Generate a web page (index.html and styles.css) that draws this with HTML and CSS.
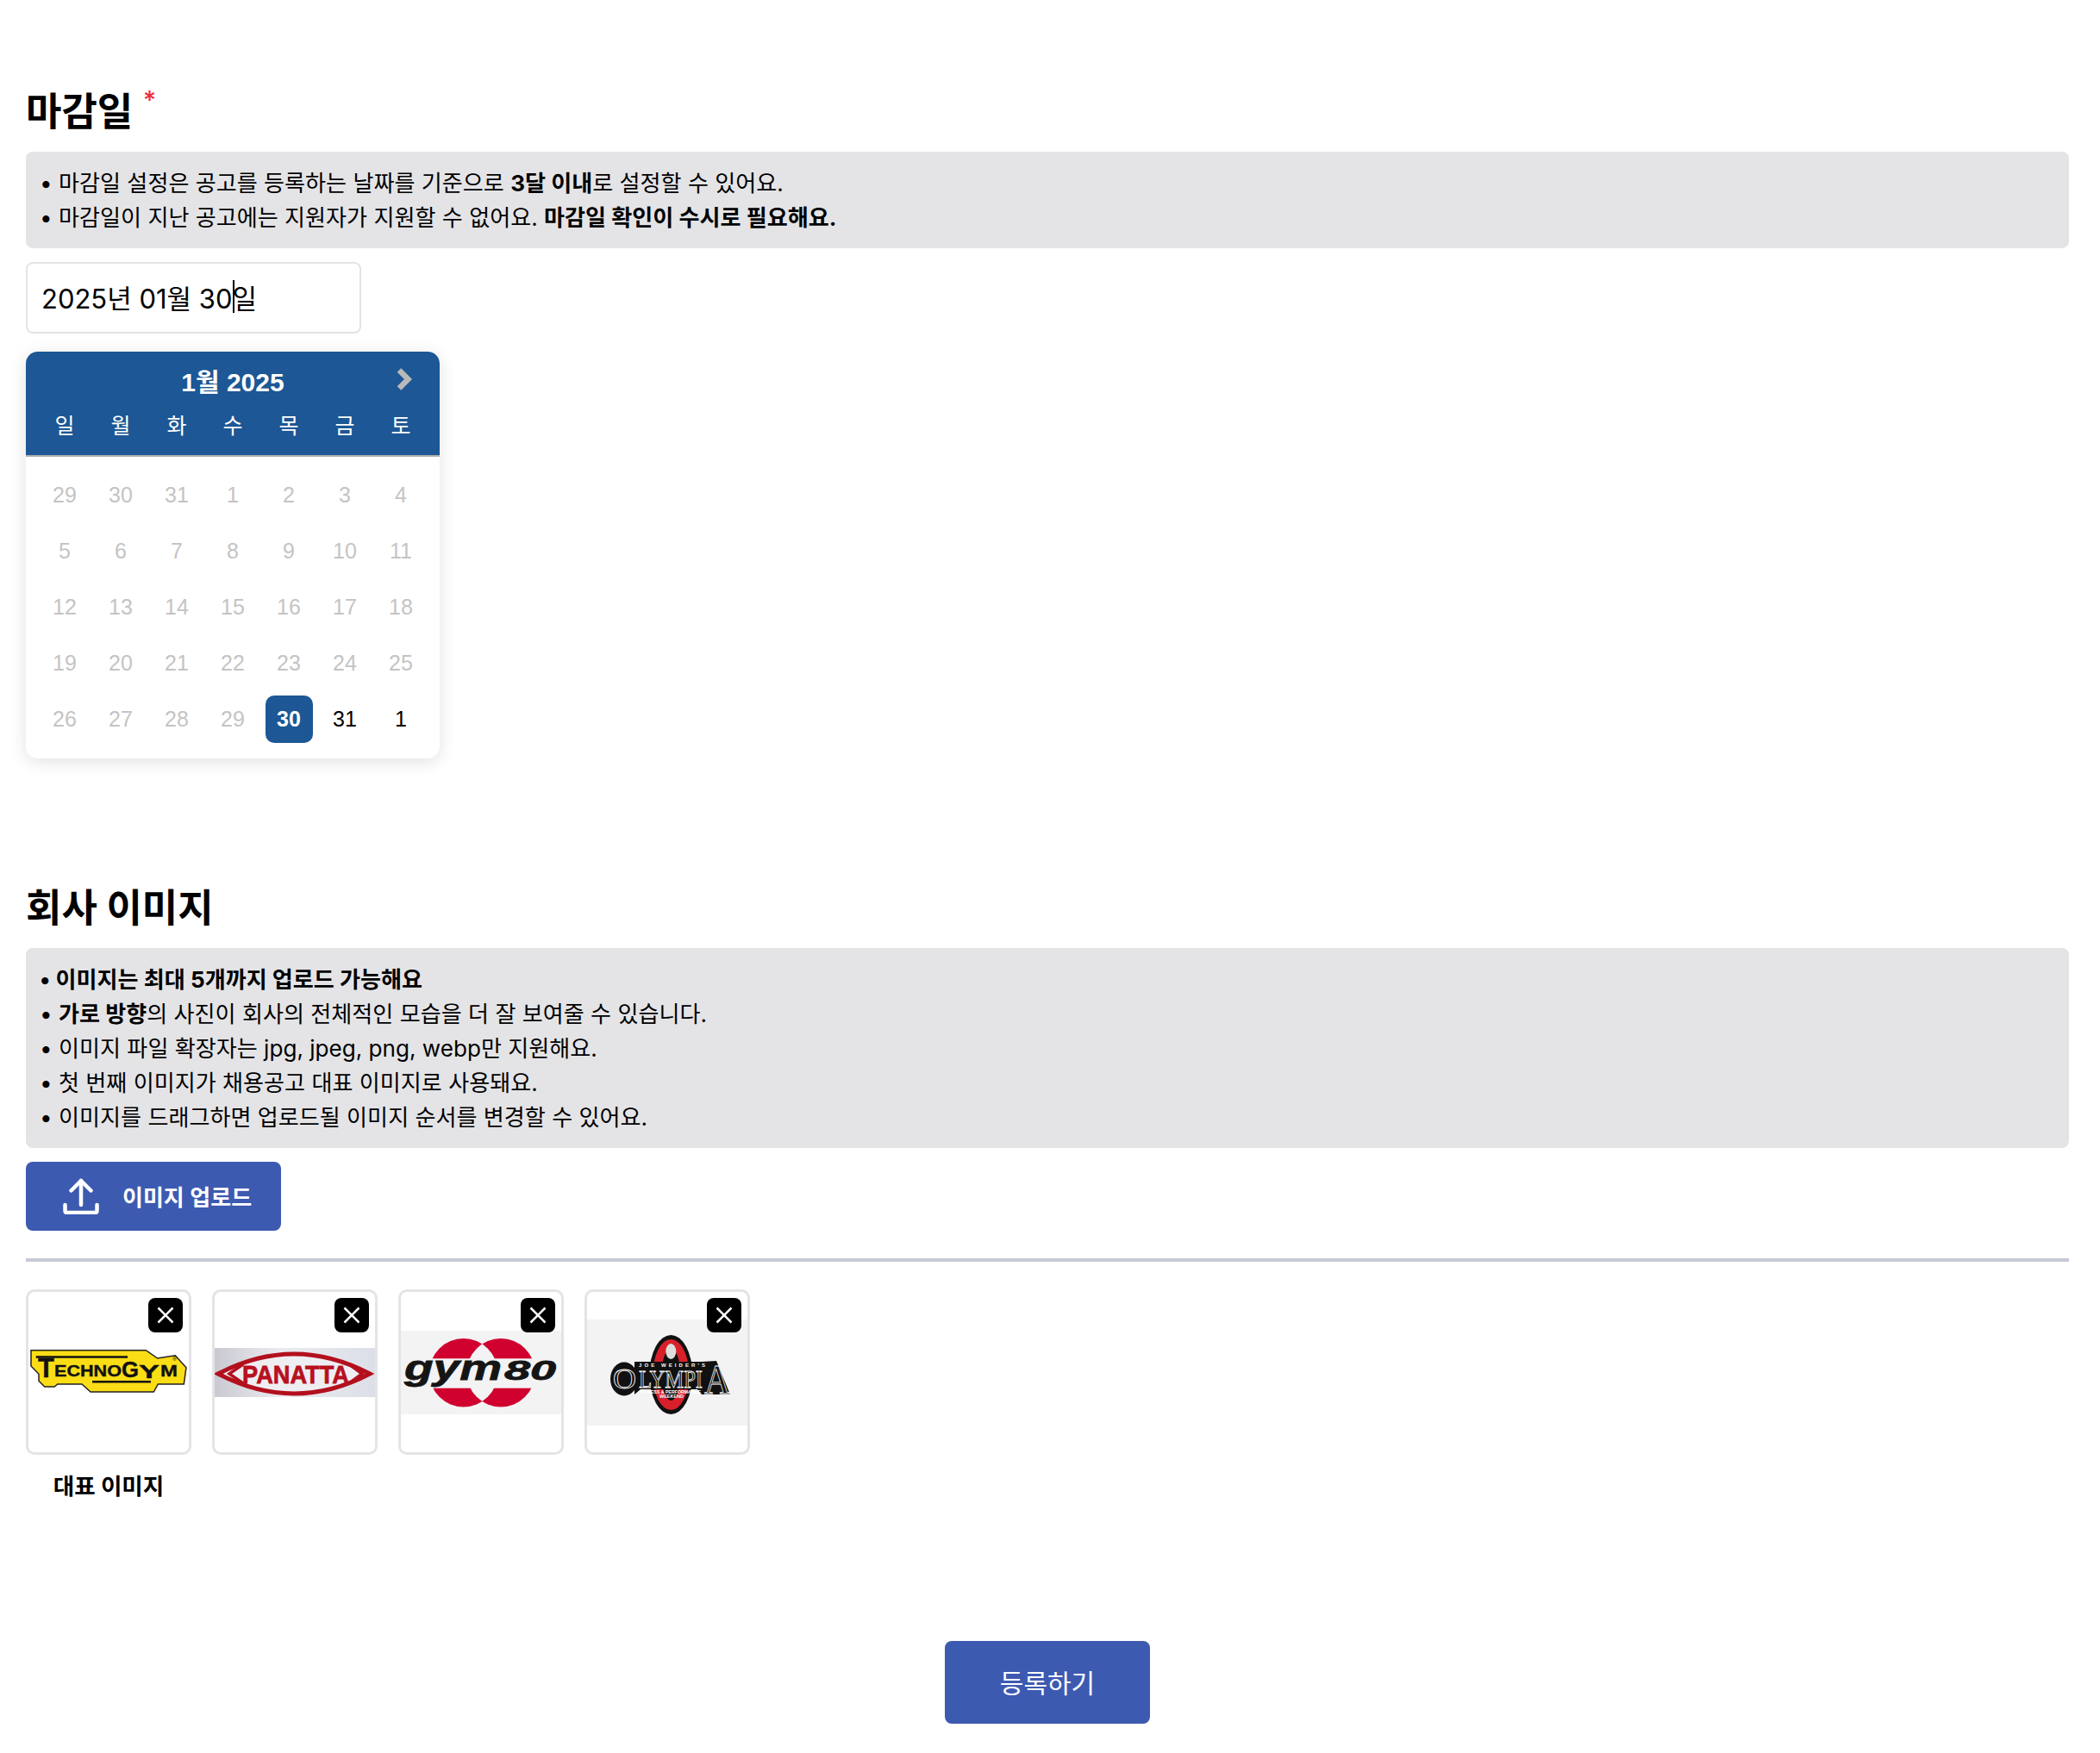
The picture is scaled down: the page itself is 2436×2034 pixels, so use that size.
FILE: index.html
```html
<!DOCTYPE html>
<html lang="ko">
<head>
    <meta charset="UTF-8">
    <meta name="viewport" content="width=device-width, initial-scale=1.0">
    <title>공고 등록</title>
    <link rel="stylesheet" href="styles.css">
</head>
<body>
    <section class="field deadline">
        <h2 class="fieldTitle">마감일 <span class="required">*</span></h2>
        <div class="infoBox">
            <p>• 마감일 설정은 공고를 등록하는 날짜를 기준으로 <b>3달 이내</b>로 설정할 수 있어요.</p>
            <p>• 마감일이 지난 공고에는 지원자가 지원할 수 없어요. <b>마감일 확인이 수시로 필요해요.</b></p>
        </div>
        <div class="dateInput">2025년 01월 30<span class="caret"></span>일</div>

        <div class="calendar">
            <div class="calHeader">
                <div class="calTitleRow">
                    <span></span>
                    <span class="calTitle">1월 2025</span>
                    <svg class="calNext" width="18" height="26" viewBox="0 0 18 26"><path d="M3 2.500L13.500 13L3 23.500" fill="none" stroke="#b9b9b9" stroke-width="6.500"/></svg>
                </div>
                <div class="calGrid calNames">
                    <span>일</span><span>월</span><span>화</span><span>수</span><span>목</span><span>금</span><span>토</span>
                </div>
            </div>
            <div class="calGrid calDays">
                <span class="off">29</span><span class="off">30</span><span class="off">31</span><span class="off">1</span><span class="off">2</span><span class="off">3</span><span class="off">4</span>
                <span class="off">5</span><span class="off">6</span><span class="off">7</span><span class="off">8</span><span class="off">9</span><span class="off">10</span><span class="off">11</span>
                <span class="off">12</span><span class="off">13</span><span class="off">14</span><span class="off">15</span><span class="off">16</span><span class="off">17</span><span class="off">18</span>
                <span class="off">19</span><span class="off">20</span><span class="off">21</span><span class="off">22</span><span class="off">23</span><span class="off">24</span><span class="off">25</span>
                <span class="off">26</span><span class="off">27</span><span class="off">28</span><span class="off">29</span><span class="selected"><b>30</b></span><span>31</span><span>1</span>
            </div>
        </div>
    </section>

    <section class="field images">
        <h2 class="fieldTitle">회사 이미지</h2>
        <div class="infoBox">
            <p><b>• 이미지는 최대 5개까지 업로드 가능해요</b></p>
            <p>• <b>가로 방향</b>의 사진이 회사의 전체적인 모습을 더 잘 보여줄 수 있습니다.</p>
            <p>• 이미지 파일 확장자는 jpg, jpeg, png, webp만 지원해요.</p>
            <p>• 첫 번째 이미지가 채용공고 대표 이미지로 사용돼요.</p>
            <p>• 이미지를 드래그하면 업로드될 이미지 순서를 변경할 수 있어요.</p>
        </div>
        <button type="button" class="uploadBtn">
            <svg width="42" height="42" viewBox="0 0 42 42" fill="none" stroke="#fff" stroke-width="4.500" stroke-linecap="round" stroke-linejoin="round"><path d="M2.500 31V37.500Q2.500 40 5 40H37Q39.500 40 39.500 37.500V31"/><path d="M21 31V3"/><path d="M9.500 14.500L21 3L32.500 14.500"/></svg>
            <span>이미지 업로드</span>
        </button>
        <hr class="divider">

        <div class="thumbList">
            <div class="thumbItem">
                <div class="thumb">
                    <svg class="logo" viewBox="0 0 186 56" height="56">
                        <path d="M3 2.700H136.300L149.700 12L170.300 8.700L183 22.700L180.300 42H150.300L145.300 51H72L62 42H33.700L30.300 45H18.700L12 38.300V30.300L3 21Z" fill="#fbdd16" stroke="#222" stroke-width="1.500"/>
                        <path d="M8.700 10.500H115M74 39.300H142" stroke="#111" stroke-width="2.500"/>
                        <g font-family="Liberation Sans" font-weight="700" fill="#111" stroke="#111" stroke-width="0.400">
                            <text x="11" y="34" font-size="31">T</text>
                            <text x="30" y="33" textLength="78" lengthAdjust="spacingAndGlyphs" font-size="19">ECHNO</text>
                            <text x="108" y="34" textLength="20" lengthAdjust="spacingAndGlyphs" font-size="25">G</text>
                            <text x="128" y="35" textLength="24" lengthAdjust="spacingAndGlyphs" font-size="22">Y</text>
                            <text x="153" y="33" textLength="20" lengthAdjust="spacingAndGlyphs" font-size="19">M</text>
                        </g>
                        <text x="167" y="15" font-family="Liberation Sans" font-size="7" fill="#111">®</text>
                    </svg>
                    <button type="button" class="removeBtn"><svg width="20" height="20" viewBox="0 0 20 20"><path d="M1.500 1.500L18.500 18.500M18.500 1.500L1.500 18.500" stroke="#fff" stroke-width="2.500"/></svg></button>
                </div>
                <p class="thumbLabel">대표 이미지</p>
            </div>
            <div class="thumbItem">
                <div class="thumb">
                    <svg class="logo" viewBox="0 0 186 57" height="57">
                        <defs><linearGradient id="panattaBg" x1="0" x2="1" y1="0" y2="0"><stop offset="0" stop-color="#c9c9d1"/><stop offset="0.4" stop-color="#ebebef"/><stop offset="1" stop-color="#dcdfe8"/></linearGradient></defs>
                        <rect width="186" height="57" fill="url(#panattaBg)"/>
                        <path d="M4 30Q92 -16 180 30Q92 76 4 30Z" fill="#eeeef2" stroke="#b3101e" stroke-width="5"/>
                        <path d="M33 19L17 30L33 41M156 19L171 30L156 41" fill="none" stroke="#b3101e" stroke-width="3.500"/>
                        <text x="32" y="41" textLength="124" lengthAdjust="spacingAndGlyphs" font-family="Liberation Sans" font-weight="700" font-size="30" fill="#b8101f" stroke="#b8101f" stroke-width="0.800">PANATTA</text>
                    </svg>
                    <button type="button" class="removeBtn"><svg width="20" height="20" viewBox="0 0 20 20"><path d="M1.500 1.500L18.500 18.500M18.500 1.500L1.500 18.500" stroke="#fff" stroke-width="2.500"/></svg></button>
                </div>
            </div>
            <div class="thumbItem">
                <div class="thumb">
                    <svg class="logo" viewBox="0 0 186 97" height="97">
                        <rect width="186" height="97" fill="#f3f3f4"/>
                        <path d="M33 48.700a39.700 39.700 0 1 0 79.400 0a39.700 39.700 0 1 0 -79.400 0ZM76.300 48.700a39.700 39.700 0 1 0 79.400 0a39.700 39.700 0 1 0 -79.400 0Z" fill="#d0012f" fill-rule="evenodd"/>
                        <rect y="32.300" width="186" height="34.400" fill="#f3f3f4"/>
                        <g font-family="Liberation Sans" font-weight="700" font-style="italic" fill="#151515" stroke="#151515" stroke-width="0.800">
                            <text x="4" y="57" textLength="113" lengthAdjust="spacingAndGlyphs" font-size="41">gym</text>
                            <text x="120" y="57" textLength="60" lengthAdjust="spacingAndGlyphs" font-size="31">80</text>
                        </g>
                    </svg>
                    <button type="button" class="removeBtn"><svg width="20" height="20" viewBox="0 0 20 20"><path d="M1.500 1.500L18.500 18.500M18.500 1.500L1.500 18.500" stroke="#fff" stroke-width="2.500"/></svg></button>
                </div>
            </div>
            <div class="thumbItem">
                <div class="thumb">
                    <svg class="logo" viewBox="0 0 186 123" height="123">
                        <rect width="186" height="123" fill="#f3f3f4"/>
                        <ellipse cx="97.300" cy="64" rx="25" ry="46" fill="#111"/>
                        <ellipse cx="97.300" cy="64" rx="21" ry="41" fill="#d8202a"/>
                        <ellipse cx="97.300" cy="64" rx="11" ry="30" fill="#111"/>
                        <ellipse cx="97.300" cy="37" rx="6" ry="9" fill="#ddd"/>
                        <ellipse cx="43" cy="69" rx="16" ry="19.500" fill="#111"/>
                        <path d="M55 49H133L150 48L166 87H133L128 81H62L55 87Z" fill="#111"/>
                        <g font-family="Liberation Serif" fill="#111" stroke="#fff" stroke-width="0.800">
                            <text x="30" y="80" textLength="27" lengthAdjust="spacingAndGlyphs" font-size="34">O</text>
                            <text x="60" y="79" textLength="74" lengthAdjust="spacingAndGlyphs" font-size="30">LYMPI</text>
                            <text x="136" y="86" textLength="30" lengthAdjust="spacingAndGlyphs" font-size="48">A</text>
                        </g>
                        <g font-family="Liberation Sans" font-weight="700" fill="#fff">
                            <text x="60" y="55" textLength="77" lengthAdjust="spacing" font-size="6">JOE WEIDER'S</text>
                            <text x="62" y="86" textLength="70" lengthAdjust="spacingAndGlyphs" font-size="5">FITNESS &amp; PERFORMANCE</text>
                            <text x="84" y="91" textLength="28" lengthAdjust="spacingAndGlyphs" font-size="4.500">WEEKEND</text>
                        </g>
                    </svg>
                    <button type="button" class="removeBtn"><svg width="20" height="20" viewBox="0 0 20 20"><path d="M1.500 1.500L18.500 18.500M18.500 1.500L1.500 18.500" stroke="#fff" stroke-width="2.500"/></svg></button>
                </div>
            </div>
        </div>
    </section>

    <div class="submitRow">
        <button type="button" class="submitBtn"><span>등록하기</span></button>
    </div>
</body>
</html>
```

FILE: styles.css
```css
* {
    box-sizing: border-box;
}
body {
    margin: 0;
    padding: 98px 36px 34px 30px;
    background: #fff;
    color: #000;
    font-family: Inter, 'Noto Sans CJK KR', sans-serif;
}
p {
    margin: 0;
}
button {
    border: none;
    cursor: pointer;
    font-family: inherit;
}
.fieldTitle {
    margin: 0 0 16px;
    padding-top: 2px;
    font-size: 45px;
    line-height: 60px;
    font-weight: 700;
    position: relative;
}
.required {
    position: absolute;
    left: 136px;
    top: 3px;
    color: #ef2b3c;
    font-size: 29px;
    line-height: 30px;
    font-weight: 500;
}
.infoBox {
    padding: 17px 16px 15px;
    background: #e4e4e7;
    border-radius: 8px;
    font-size: 26.1px;
    line-height: 40px;
}
.dateInput {
    display: flex;
    align-items: center;
    width: 389px;
    height: 83px;
    margin-top: 16px;
    padding: 0 16px 3px;
    border: 2px solid #e4e4e7;
    border-radius: 8px;
    font-size: 31px;
}
.caret {
    width: 0;
    height: 38px;
    border-left: 2px solid #000;
    margin-right: -2px;
}

/* date picker */
.calendar {
    width: 480px;
    margin-top: 21px;
    background: #fff;
    border-radius: 14px;
    box-shadow: 0 4px 20px rgba(0, 0, 0, 0.12);
    font-family: 'Liberation Sans', 'Noto Sans CJK KR', sans-serif;
}
.calHeader {
    height: 122px;
    padding-top: 11px;
    background: #1d5795;
    border-bottom: 2px solid #aeaeae;
    border-radius: 14px 14px 0 0;
    color: #fff;
}
.calTitleRow {
    display: grid;
    grid-template-columns: 1fr auto 1fr;
    align-items: center;
    height: 40px;
}
.calTitle {
    font-size: 30px;
    font-weight: 700;
}
.calNext {
    justify-self: end;
    margin: -2px 32px 0 0;
}
.calGrid {
    display: grid;
    grid-template-columns: repeat(7, 65px);
    padding: 0 12.5px;
    text-align: center;
}
.calNames {
    margin-top: 15px;
    font-size: 25px;
    line-height: 40px;
}
.calDays {
    padding-top: 11.5px;
    padding-bottom: 13.5px;
    grid-auto-rows: 65px;
    font-size: 25px;
}
.calDays span {
    display: flex;
    align-items: center;
    justify-content: center;
}
.calDays .off {
    color: #c4c4c4;
}
.calDays .selected {
    margin: 5px;
    background: #1d5795;
    border-radius: 10px;
    color: #fff;
}

/* company images */
.images {
    margin-top: 142px;
}
.uploadBtn {
    display: flex;
    align-items: center;
    gap: 27px;
    width: 296px;
    height: 80px;
    margin-top: 16px;
    padding: 0 0 2px 43px;
    background: #3d5ab1;
    border-radius: 8px;
    color: #fff;
    font-size: 26px;
    font-weight: 600;
}
.uploadBtn svg {
    margin-top: 2px;
}
.divider {
    height: 4px;
    margin: 32px 0;
    border: none;
    background: #c5cad5;
}
.thumbList {
    display: flex;
    gap: 24px;
}
.thumbItem {
    width: 192px;
}
.thumb {
    display: flex;
    align-items: center;
    position: relative;
    height: 192px;
    border: 3px solid #e4e4e7;
    border-radius: 10px;
}
.logo {
    display: block;
    width: 100%;
}
.removeBtn {
    display: flex;
    align-items: center;
    justify-content: center;
    position: absolute;
    top: 7px;
    right: 7px;
    width: 40px;
    height: 40px;
    padding: 0;
    background: #000;
    border-radius: 8px;
}
.thumbLabel {
    margin-top: 16px;
    text-align: center;
    font-size: 26.6px;
    line-height: 40px;
    font-weight: 700;
}
.submitRow {
    display: flex;
    justify-content: center;
    margin-top: 160px;
}
.submitBtn {
    width: 238px;
    height: 96px;
    padding-bottom: 4px;
    background: #3d5ab1;
    border-radius: 8px;
    color: #fff;
    font-size: 30px;
}
```
